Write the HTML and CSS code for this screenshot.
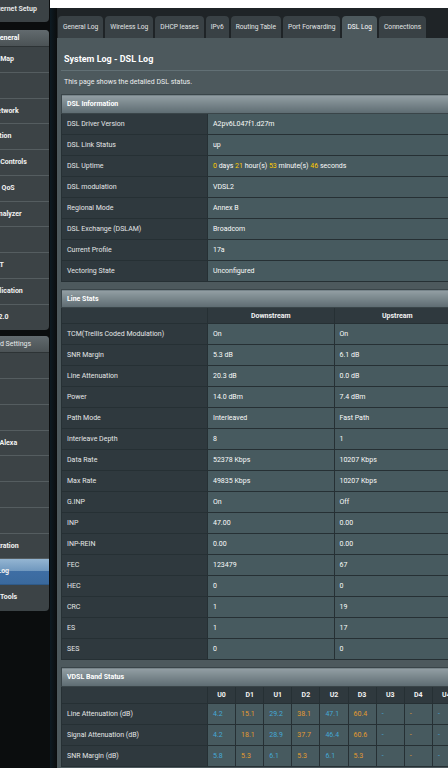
FILE: index.html
```html
<!DOCTYPE html>
<html>
<head>
<meta charset="utf-8">
<link rel="stylesheet" href="styles.css">
</head>
<body>
<div class="page">
  <aside class="side">
    <div class="menu-top"><span>Internet Setup</span></div>
    <div class="menu">
      <div class="menu-head general">General</div>
      <div class="item">Network Map</div>
      <div class="item">AiMesh</div>
      <div class="item">Guest Network</div>
      <div class="item">AiProtection</div>
      <div class="item">Parental Controls</div>
      <div class="item">Adaptive QoS</div>
      <div class="item">Traffic Analyzer</div>
      <div class="item">Game</div>
      <div class="item">Open NAT</div>
      <div class="item">USB Application</div>
      <div class="item last">AiCloud 2.0</div>
    </div>
    <div class="menu">
      <div class="menu-head advanced">Advanced Settings</div>
      <div class="item">Wireless</div>
      <div class="item">LAN</div>
      <div class="item">WAN</div>
      <div class="item">Amazon Alexa</div>
      <div class="item">IPv6</div>
      <div class="item">VPN</div>
      <div class="item">Firewall</div>
      <div class="item">Administration</div>
      <div class="item active">System Log</div>
      <div class="item last">Network Tools</div>
    </div>
  </aside>
  <main class="main">
    <div class="topbar"></div>
    <div class="content">
      <nav class="tabs">
        <div class="tab">General Log</div>
        <div class="tab">Wireless Log</div>
        <div class="tab">DHCP leases</div>
        <div class="tab">IPv6</div>
        <div class="tab">Routing Table</div>
        <div class="tab">Port Forwarding</div>
        <div class="tab on">DSL Log</div>
        <div class="tab">Connections</div>
      </nav>
      <section class="panel">
        <div class="title">System Log - DSL Log</div>
        <div class="desc">This page shows the detailed DSL status.</div>

        <table class="ft info">
          <colgroup><col class="c-label"><col></colgroup>
          <tr class="head"><td colspan="2">DSL Information</td></tr>
          <tr><th>DSL Driver Version</th><td>A2pv6L047f1.d27m</td></tr>
          <tr><th>DSL Link Status</th><td>up</td></tr>
          <tr><th>DSL Uptime</th><td><span class="y">0</span> days <span class="y">21</span> hour(s) <span class="y">53</span> minute(s) <span class="y">46</span> seconds</td></tr>
          <tr><th>DSL modulation</th><td>VDSL2</td></tr>
          <tr><th>Regional Mode</th><td>Annex B</td></tr>
          <tr><th>DSL Exchange (DSLAM)</th><td>Broadcom</td></tr>
          <tr><th>Current Profile</th><td>17a</td></tr>
          <tr><th>Vectoring State</th><td>Unconfigured</td></tr>
        </table>

        <table class="ft stats">
          <colgroup><col class="c-label"><col><col></colgroup>
          <tr class="head"><td colspan="3">Line Stats</td></tr>
          <tr class="sub"><th></th><th>Downstream</th><th>Upstream</th></tr>
          <tr><th>TCM(Trellis Coded Modulation)</th><td>On</td><td>On</td></tr>
          <tr><th>SNR Margin</th><td>5.3 dB</td><td>6.1 dB</td></tr>
          <tr><th>Line Attenuation</th><td>20.3 dB</td><td>0.0 dB</td></tr>
          <tr><th>Power</th><td>14.0 dBm</td><td>7.4 dBm</td></tr>
          <tr><th>Path Mode</th><td>Interleaved</td><td>Fast Path</td></tr>
          <tr><th>Interleave Depth</th><td>8</td><td>1</td></tr>
          <tr><th>Data Rate</th><td>52378 Kbps</td><td>10207 Kbps</td></tr>
          <tr><th>Max Rate</th><td>49835 Kbps</td><td>10207 Kbps</td></tr>
          <tr><th>G.INP</th><td>On</td><td>Off</td></tr>
          <tr><th>INP</th><td>47.00</td><td>0.00</td></tr>
          <tr><th>INP-REIN</th><td>0.00</td><td>0.00</td></tr>
          <tr><th>FEC</th><td>123479</td><td>67</td></tr>
          <tr><th>HEC</th><td>0</td><td>0</td></tr>
          <tr><th>CRC</th><td>1</td><td>19</td></tr>
          <tr><th>ES</th><td>1</td><td>17</td></tr>
          <tr><th>SES</th><td>0</td><td>0</td></tr>
        </table>

        <table class="ft band">
          <colgroup><col class="c-label"><col><col><col><col><col><col><col><col><col></colgroup>
          <tr class="head"><td colspan="10">VDSL Band Status</td></tr>
          <tr class="sub"><th></th><th>U0</th><th>D1</th><th>U1</th><th>D2</th><th>U2</th><th>D3</th><th>U3</th><th>D4</th><th>U4</th></tr>
          <tr><th>Line Attenuation (dB)</th><td class="u">4.2</td><td class="d">15.1</td><td class="u">29.2</td><td class="d">38.1</td><td class="u">47.1</td><td class="d">60.4</td><td class="u">-</td><td class="d">-</td><td class="u">-</td></tr>
          <tr><th>Signal Attenuation (dB)</th><td class="u">4.2</td><td class="d">18.1</td><td class="u">28.9</td><td class="d">37.7</td><td class="u">46.4</td><td class="d">60.6</td><td class="u">-</td><td class="d">-</td><td class="u">-</td></tr>
          <tr><th>SNR Margin (dB)</th><td class="u">5.8</td><td class="d">5.3</td><td class="u">6.1</td><td class="d">5.3</td><td class="u">6.1</td><td class="d">5.3</td><td class="u">-</td><td class="d">-</td><td class="u">-</td></tr>
        </table>
      </section>
    </div>
  </main>
</div>
</body>
</html>
```
FILE: styles.css
```css
html, body {
  margin: 0;
  padding: 0;
  overflow: hidden;
}
body {
  background: #0b0d0e;
  font-family: Roboto, "Liberation Sans", sans-serif;
  font-size: 7px;
  color: #fff;
}
.page {
  display: flex;
  width: 448px;
  height: 768px;
  overflow: hidden;
}

/* ---------- sidebar ---------- */
.side {
  flex: none;
  width: 50px;
  display: flex;
  flex-direction: column;
}
.menu-top {
  flex: none;
  width: 49px;
  height: 22px;
  box-sizing: border-box;
  padding-top: 5px;
  line-height: 8px;
  background: #3b4245;
  border-radius: 0 0 4px 0;
  overflow: hidden;
  white-space: nowrap;
  text-indent: -8px;
  color: #e4e6e7;
  font-weight: bold;
}
.menu {
  flex: none;
  width: 49px;
  margin-top: 8px;
  background: #3c4346;
  border-radius: 0 4px 4px 0;
  overflow: hidden;
}
.menu + .menu {
  margin-top: 6px;
}
.menu-head {
  height: 17px;
  line-height: 17px;
  white-space: nowrap;
  overflow: hidden;
  background: linear-gradient(#626a6e, #4b5255);
  border-bottom: 1px solid #2d3335;
  box-sizing: border-box;
}
.menu-head.general {
  text-indent: -5px;
  font-weight: bold;
}
.menu-head.advanced {
  text-indent: -27px;
  color: #e8eaeb;
}
.item {
  height: 25.75px;
  line-height: 25px;
  box-sizing: border-box;
  border-bottom: 1px solid #555d60;
  white-space: nowrap;
  overflow: hidden;
  text-indent: -28px;
  font-weight: bold;
  color: #f2f2f2;
}
.item.last {
  border-bottom: none;
}
.item.active {
  background: linear-gradient(#94b5d2 0%, #6f97be 48%, #3e6ea4 50%, #3a699d 100%);
  border-bottom-color: #2f5a88;
}

/* ---------- main ---------- */
.main {
  flex: none;
  width: 420px;
  height: 768px;
  display: flex;
  flex-direction: column;
  overflow: hidden;
}
.topbar {
  flex: none;
  height: 8px;
  background: #ffffff;
}
.content {
  flex: 1;
  min-height: 0;
  overflow: hidden;
  padding-left: 7px;
  background: linear-gradient(90deg, #0d1a22 0, #0b0d0e 7px);
}
.tabs {
  display: flex;
  gap: 2px;
  padding: 8px 0 0 1px;
  background: #1f2427;
}
.tab {
  height: 22px;
  line-height: 22px;
  padding: 0 5px;
  font-size: 6.65px;
  background: #394145;
  color: #e2e5e6;
  border-radius: 4px 4px 0 0;
  white-space: nowrap;
}
.tab.on {
  background: #4d595d;
  color: #fff;
}
.panel {
  background: #4d595d;
  padding: 0 0 0 4px;
  height: 740px;
}
.title {
  height: 33px;
  line-height: 43px;
  box-sizing: border-box;
  padding-left: 3px;
  font-size: 9px;
  font-weight: bold;
  border-bottom: 1px solid #627075;
}
.desc {
  height: 23px;
  line-height: 22px;
  box-sizing: border-box;
  padding-left: 3px;
  color: #eceeee;
}

/* ---------- tables ---------- */
.ft {
  width: 400px;
  border-collapse: collapse;
  table-layout: fixed;
  margin-bottom: 7px;
  border: 1px solid #283034;
}
.ft col.c-label {
  width: 146px;
}
.ft th, .ft td {
  height: 20px;
  padding: 0 5px;
  border: 1px solid #263034;
  white-space: nowrap;
  overflow: hidden;
  text-align: left;
  vertical-align: middle;
}
.ft th {
  background: #2f393e;
  color: #e4e6e7;
  font-weight: normal;
}
.ft td {
  background: #475a5f;
  color: #fafafa;
}
.ft tr.head td {
  height: 18px;
  background: linear-gradient(#939fa4, #5d6b71);
  font-weight: bold;
  color: #fff;
  border-color: #3a4549;
}
.ft tr.sub th {
  height: 15px;
  font-weight: bold;
  text-align: center;
  color: #f2f2f2;
}
.ft tr.sub th:first-child {
  text-align: left;
}
.stats tr.head td {
  height: 17px;
}
.band tr.sub th {
  height: 16px;
}
.y {
  color: #ffcc00;
}
.band td.u {
  color: #45a8d6;
}
.band td.d {
  color: #e39a31;
}
```
